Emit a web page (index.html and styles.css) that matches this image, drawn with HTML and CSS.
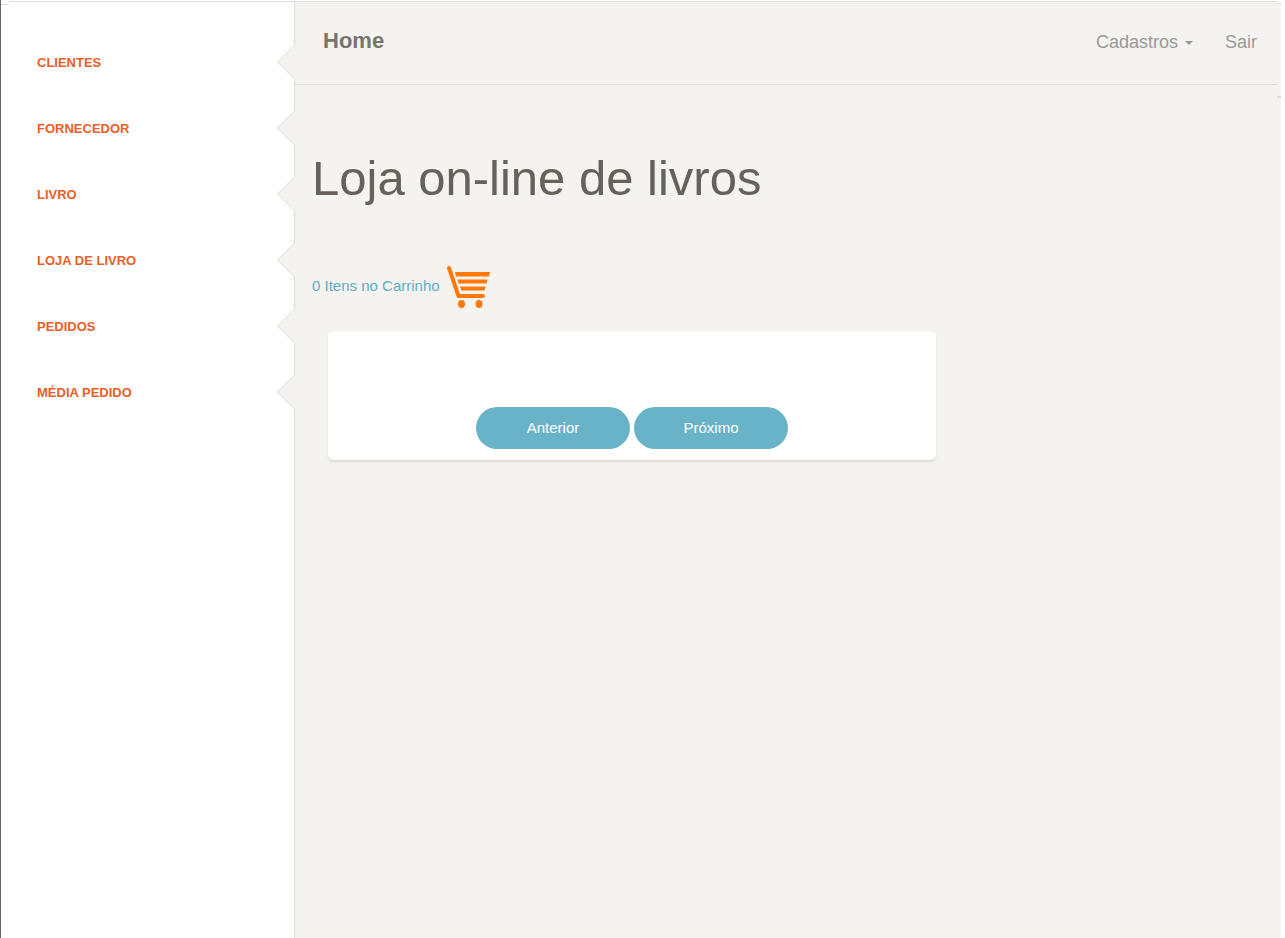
FILE: index.html
```html
<!DOCTYPE html>
<html lang="pt-BR">
<head>
<meta charset="utf-8">
<meta name="viewport" content="width=device-width, initial-scale=1">
<title>Loja on-line de livros</title>
<link rel="stylesheet" href="styles.css">
</head>
<body>
<div class="shell">
  <aside class="sidebar">
    <nav aria-label="Menu lateral">
      <ul class="side-menu">
        <li class="side-item"><a href="#clientes">Clientes</a></li>
        <li class="side-item"><a href="#fornecedor">Fornecedor</a></li>
        <li class="side-item"><a href="#livro">Livro</a></li>
        <li class="side-item"><a href="#loja">Loja de Livro</a></li>
        <li class="side-item"><a href="#pedidos">Pedidos</a></li>
        <li class="side-item"><a href="#media">Média Pedido</a></li>
      </ul>
    </nav>
  </aside>
  <div class="panel">
    <header class="topbar">
      <a class="brand" href="#home">Home</a>
      <nav class="top-links" aria-label="Menu principal">
        <button class="top-link" type="button" aria-haspopup="true">Cadastros<span class="caret"></span></button>
        <a class="top-link" href="#sair">Sair</a>
      </nav>
    </header>
    <main class="content">
      <h1 class="title">Loja on-line de livros</h1>
      <a class="cart" href="#carrinho">0 Itens no Carrinho
        <svg class="cart-icon" viewBox="0 -2 46 46" aria-hidden="true">
          <path d="M3 3 12.5 31H37" fill="none" stroke="#ff780a" stroke-width="4" stroke-linecap="round" stroke-linejoin="round"/>
          <path d="M9 7H44L43 11.500H10ZM11.500 14.500H41.500L40.500 18.500H12.500ZM14 21.500H39.500L38.500 25.500H15.500Z" fill="#ff780a"/>
          <ellipse cx="15.500" cy="39" rx="3.500" ry="4" fill="#ff780a"/>
          <ellipse cx="33" cy="39" rx="3.500" ry="4" fill="#ff780a"/>
        </svg>
      </a>
      <section class="card">
        <button class="btn" type="button">Anterior</button>
        <button class="btn" type="button">Próximo</button>
      </section>
    </main>
  </div>
  <div class="edge"></div>
</div>
</body>
</html>
```
FILE: styles.css
```css
* { box-sizing: border-box; }

body {
  margin: 0;
  padding-right: 4px;
  background: #fff;
  color: #66615b;
  font-family: "Liberation Sans", Arial, sans-serif;
  font-size: 15px;
}

a { text-decoration: none; }

.shell {
  position: relative;
  display: flex;
  min-height: 100vh;
  padding-top: 1px;
  border-left: 1px solid #66666a;
}

.shell::before {
  content: "";
  position: absolute;
  top: 1px;
  left: 0;
  width: 8px;
  height: 3px;
  background: #fff;
  border-bottom: 1px solid #ddd;
}

.sidebar {
  flex: 0 0 294px;
  padding-top: 27px;
  border-top: 1px solid #ddd;
  border-right: 1px solid #ddd;
}

.side-menu {
  margin: 0;
  padding: 0;
  list-style: none;
}

.side-item {
  position: relative;
  display: flex;
  align-items: center;
  height: 66px;
  padding: 2px 0 0 36px;
}

.side-item a {
  color: #eb5e28;
  font-size: 13px;
  font-weight: 700;
  line-height: 20px;
  text-transform: uppercase;
}

/* Notch cut into the sidebar edge */
.side-item::before,
.side-item::after {
  content: "";
  position: absolute;
  top: 15px;
  right: -1px;
  width: 18px;
  height: 36px;
  background: #ddd;
  clip-path: polygon(100% 0, 0 50%, 100% 100%);
}

.side-item::after {
  top: 16px;
  width: 17px;
  height: 34px;
  background: #f4f3ef;
}

.panel {
  flex: 1;
  min-width: 0;
  padding-right: 4px;
  background: #f4f3ef;
  border-top: 1px solid #ddd;
}

.topbar {
  display: flex;
  justify-content: space-between;
  height: 83px;
  padding: 24px 20px 0 28px;
  border-bottom: 1px solid #ddd;
}

.brand {
  color: #777570;
  font-size: 22px;
  font-weight: 700;
  line-height: 30px;
}

.top-links {
  display: flex;
  align-items: flex-start;
  gap: 32px;
}

.top-link {
  display: flex;
  align-items: center;
  gap: 7px;
  padding: 0;
  border: 0;
  background: none;
  color: #9a9a9a;
  font-family: inherit;
  font-size: 18px;
  line-height: 32px;
}

.caret {
  margin-top: 2px;
  border-top: 4px solid;
  border-right: 4px solid transparent;
  border-left: 4px solid transparent;
}

.content { padding: 63px 17px; }

.title {
  margin: 0 0 55px;
  font-size: 49px;
  font-weight: 400;
  line-height: 60px;
}

.cart {
  display: flex;
  align-items: center;
  gap: 6px;
  width: max-content;
  color: #5fadc8;
  line-height: 20px;
}

.cart-icon {
  width: 46px;
  height: 46px;
}

.card {
  display: flex;
  justify-content: center;
  gap: 4px;
  max-width: 608px;
  margin: 22px 0 0 16px;
  padding: 76px 16px 11px;
  border-radius: 6px;
  background: #fff;
  box-shadow: 0 2px 2px rgba(204, 197, 185, 0.5);
}

.btn {
  width: 154px;
  height: 42px;
  padding: 0 0 2px;
  border: 0;
  border-radius: 21px;
  background: #68b3c8;
  color: #fff;
  font-family: inherit;
  font-size: 15px;
}

/* Lines of the layer behind, visible at the right end of the bar */
.edge {
  position: absolute;
  top: 0;
  right: 0;
  width: 4px;
  height: 98px;
  border-bottom: 2px solid #ddd;
  background: linear-gradient(#fff 3px, #ddd 3px, #ddd 4px, #f4f3ef 4px);
}
```
